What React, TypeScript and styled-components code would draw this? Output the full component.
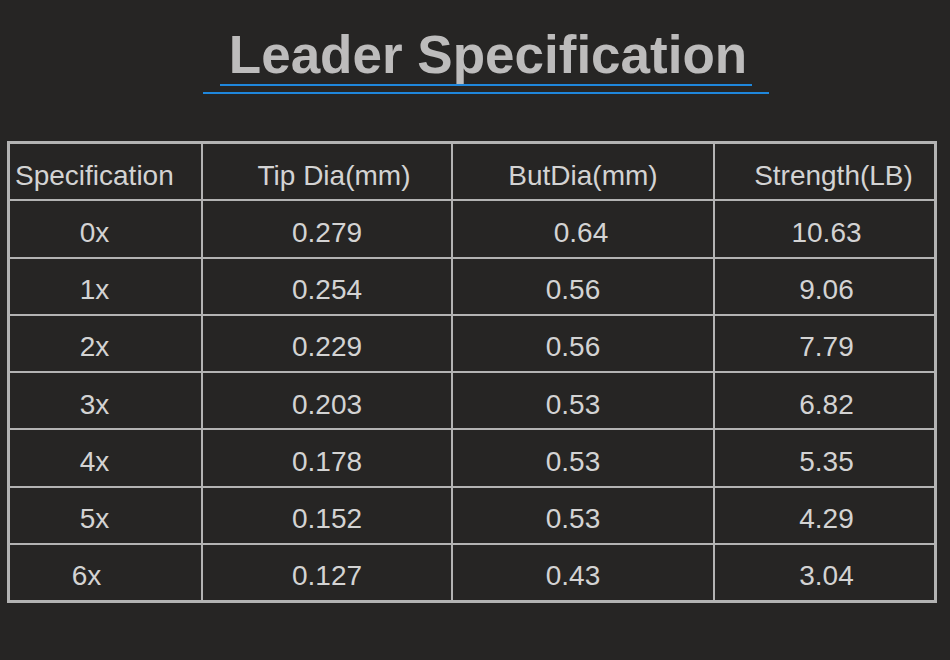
import React from "react";
import styled, { createGlobalStyle } from "styled-components";

const Global = createGlobalStyle`
  html, body { margin: 0; padding: 0; background: #262524; }
  body { font-family: "Liberation Sans", Arial, sans-serif; }
`;

const Page = styled.div`
  width: 950px;
  height: 660px;
  background: #262524;
  box-sizing: border-box;
  padding: 28px 13px 0 7px;
  display: flex;
  flex-direction: column;
`;

const Header = styled.header`
  display: flex;
  flex-direction: column;
  align-items: center;
  padding-left: 14px;
  margin-right: -13px;
`;

const Title = styled.h1`
  margin: 0;
  font-family: "Liberation Sans", Arial, sans-serif;
  font-weight: 700;
  font-size: 53px;
  line-height: 53px;
  color: #bdbcbc;
  padding-left: 5px;
`;

const Rule = styled.div<{ $w: number; $top: number }>`
  width: ${(p) => p.$w}px;
  height: 2px;
  margin-top: ${(p) => p.$top}px;
  background: #1f87dc;
`;

const Table = styled.div`
  margin-top: 47px;
  width: 930px;
  height: 462px;
  box-sizing: border-box;
  display: grid;
  grid-template-columns: 191px 248px 260px 219px;
  grid-auto-rows: 1fr;
  gap: 2px;
  padding: 3px;
  background: #b3b3b3;
`;

const Cell = styled.div<{ $left?: boolean }>`
  background: #262524;
  display: flex;
  align-items: center;
  justify-content: ${(p) => (p.$left ? "flex-start" : "center")};
  padding: 8px 0 0 ${(p) => (p.$left ? 5 : 0)}px;
  box-sizing: border-box;
  font-family: "Liberation Sans", Arial, sans-serif;
  font-size: 28px;
  color: #d3d3d3;
  white-space: nowrap;
`;

const Text = styled.span<{ $shift?: number }>`
  transform: translateX(${(p) => p.$shift ?? 0}px);
`;

type Row = { spec: string; tip: string; but: string; str: string; s1: number; s3: number };

const rows: Row[] = [
  { spec: "0x", tip: "0.279", but: "0.64", str: "10.63", s1: -11, s3: -2 },
  { spec: "1x", tip: "0.254", but: "0.56", str: "9.06", s1: -11, s3: -10 },
  { spec: "2x", tip: "0.229", but: "0.56", str: "7.79", s1: -11, s3: -10 },
  { spec: "3x", tip: "0.203", but: "0.53", str: "6.82", s1: -11, s3: -10 },
  { spec: "4x", tip: "0.178", but: "0.53", str: "5.35", s1: -11, s3: -10 },
  { spec: "5x", tip: "0.152", but: "0.53", str: "4.29", s1: -11, s3: -10 },
  { spec: "6x", tip: "0.127", but: "0.43", str: "3.04", s1: -19, s3: -10 },
];

export default function App() {
  return (
    <>
      <Global />
      <Page>
        <Header>
          <Title>Leader Specification</Title>
          <Rule $w={532} $top={3} />
          <Rule $w={566} $top={6} />
        </Header>
        <Table>
          <Cell $left>Specification</Cell>
          <Cell>
            <Text $shift={7}>Tip Dia(mm)</Text>
          </Cell>
          <Cell>
            <Text>ButDia(mm)</Text>
          </Cell>
          <Cell>
            <Text $shift={9}>Strength(LB)</Text>
          </Cell>
          {rows.map((r) => (
            <React.Fragment key={r.spec}>
              <Cell>
                <Text $shift={r.s1}>{r.spec}</Text>
              </Cell>
              <Cell>
                <Text>{r.tip}</Text>
              </Cell>
              <Cell>
                <Text $shift={r.s3}>{r.but}</Text>
              </Cell>
              <Cell>
                <Text $shift={2}>{r.str}</Text>
              </Cell>
            </React.Fragment>
          ))}
        </Table>
      </Page>
    </>
  );
}
